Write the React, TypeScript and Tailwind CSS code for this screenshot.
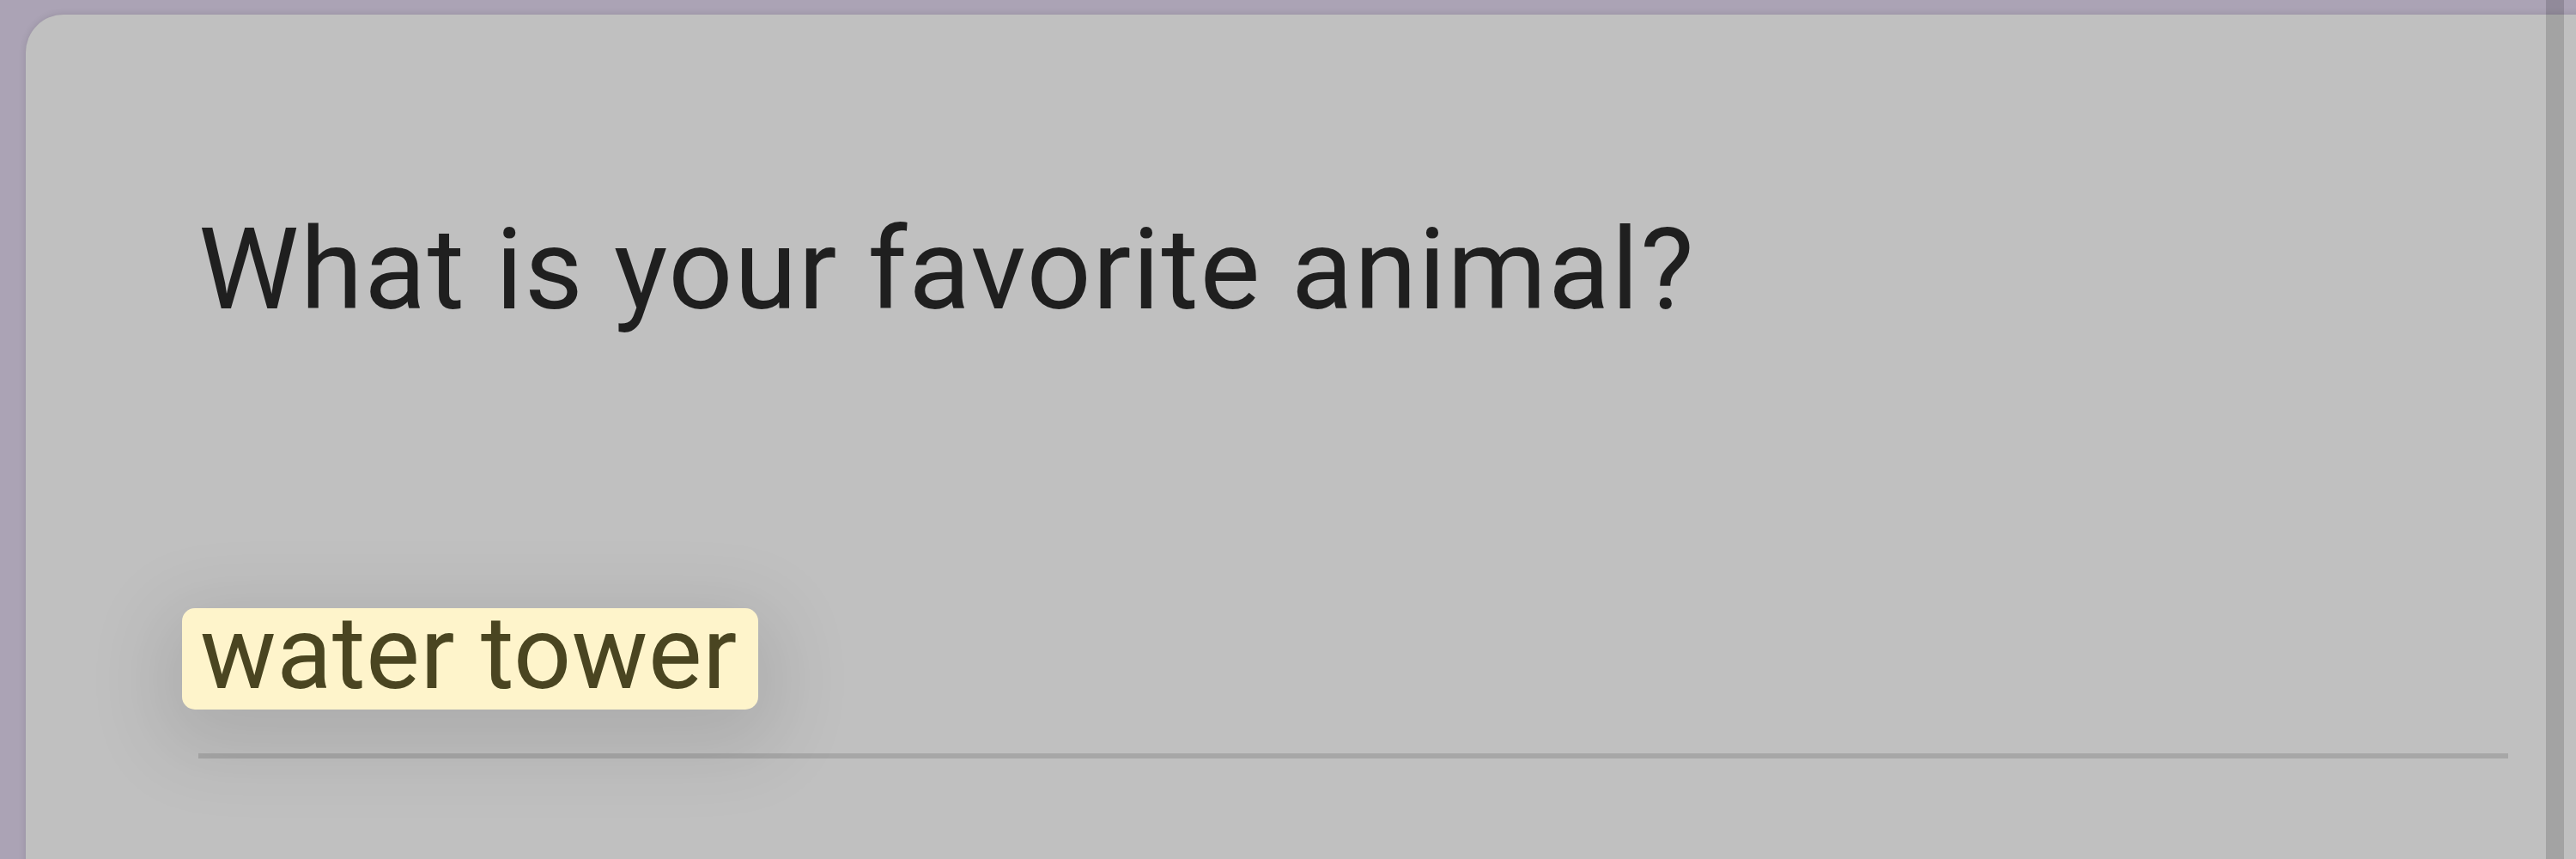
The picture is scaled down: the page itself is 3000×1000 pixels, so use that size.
export default function App() {
  return (
    <div className="relative h-[1000px] w-[3000px] overflow-hidden bg-[#aba3b5] pl-[30px] pt-[17px] font-['Roboto',sans-serif]">
      {/* question card */}
      <div className="h-[1100px] w-[3100px] rounded-tl-[44px] bg-[#c0c0c0] pl-[201px] pt-[231px] shadow-[0_0_8px_rgba(0,0,0,0.12)]">
        <h1 className="text-[132px] leading-[132px] font-normal tracking-[1.7px] text-[#1f1f1f]">
          What is your favorite animal?
        </h1>

        <div className="mt-[328px] flex">
          <span className="-ml-[19px] h-[118px] rounded-[15px] bg-[#fef4cb] pl-[21px] pr-[24px] text-[118px] leading-[107px] tracking-[0.6px] text-[#4a4521] shadow-[0_24px_90px_24px_rgba(0,0,0,0.1)]">
            water tower
          </span>
        </div>

        <div className="mt-[51px] h-[6px] w-[2690px] bg-[#a7a7a7]" />
      </div>

      {/* scrollbar strip */}
      <div className="absolute right-[14px] top-0 h-full w-[21px] bg-black/15" />
    </div>
  );
}
